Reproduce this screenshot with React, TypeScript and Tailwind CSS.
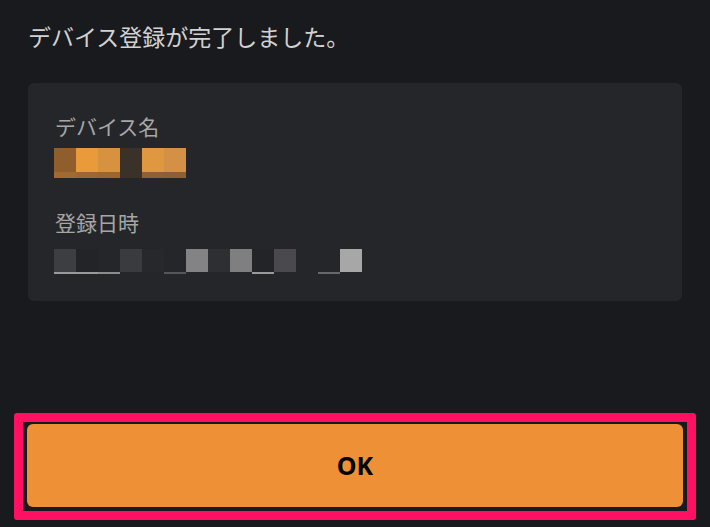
import React from 'react';

const nameCells = [
  { top: '#8f5e2c', bottom: '#a16a31' },
  { top: '#e99a3b', bottom: '#9c6730' },
  { top: '#d6923f', bottom: '#9a6630' },
  { top: '#3a3128', bottom: '#3a3128' },
  { top: '#df983f', bottom: '#8e6135' },
  { top: '#d49146', bottom: '#8b6036' },
];

const dateCells = [
  { fill: '#3d3e41', line: '#9a9a9a' },
  { fill: '#232427', line: '#9a9a9a' },
  { fill: '#252629', line: '#8c8c8c' },
  { fill: '#3a3b3e', line: 'transparent' },
  { fill: '#27282b', line: 'transparent' },
  { fill: '#252629', line: '#55565a' },
  { fill: '#838385', line: 'transparent' },
  { fill: '#2e2f32', line: 'transparent' },
  { fill: '#7f7f82', line: 'transparent' },
  { fill: '#232427', line: '#9a9a9a' },
  { fill: '#4a4a4e', line: 'transparent' },
  { fill: 'transparent', line: 'transparent' },
  { fill: 'transparent', line: '#66676a' },
  { fill: '#a7a7a8', line: 'transparent' },
];

export default function App() {
  return (
    <div
      className="w-[710px] h-[527px] bg-[#191a1e] flex flex-col overflow-hidden"
      style={{ fontFamily: '"Noto Sans CJK JP", "Noto Sans", sans-serif' }}
    >
      <div className="px-[28px]">
        <p className="pt-[19px] text-[23px] leading-[34px] text-[#d2d2d2]">デバイス登録が完了しました。</p>

        <div className="mt-[30px] rounded-[6px] bg-[#252629] pl-[26px] pt-[28px] pb-[27px]">
          <p className="text-[21px] leading-[30px] text-[#a6a6a6] pl-[1px]">デバイス名</p>
          {/* モザイク */}
          <div className="mt-[7px] flex">
            {nameCells.map((c, i) => (
              <div key={i} className="w-[22px] flex flex-col">
                <div className="h-[24px]" style={{ background: c.top }} />
                <div className="h-[6px]" style={{ background: c.bottom }} />
              </div>
            ))}
          </div>

          <p className="mt-[29px] text-[21px] leading-[30px] text-[#a6a6a6] pl-[1px]">登録日時</p>
          <div className="mt-[12px] flex">
            {dateCells.map((c, i) => (
              <div key={i} className="w-[22px] flex flex-col">
                <div className="h-[23px]" style={{ background: c.fill }} />
                <div className="h-[2px]" style={{ background: c.line }} />
              </div>
            ))}
          </div>
        </div>
      </div>

      <div className="flex-1" />

      <div className="mx-[14px] mb-[7px] border-[9px] border-[#ff1060] rounded-[3px] pt-[2px] pb-[4px] px-[4px]">
        <button
          className="w-full h-[83px] rounded-[6px] bg-[#ee9036] text-black text-[25px] font-bold flex items-center justify-center"
          style={{ fontFamily: '"Noto Sans", sans-serif' }}
        >
          OK
        </button>
      </div>
    </div>
  );
}
